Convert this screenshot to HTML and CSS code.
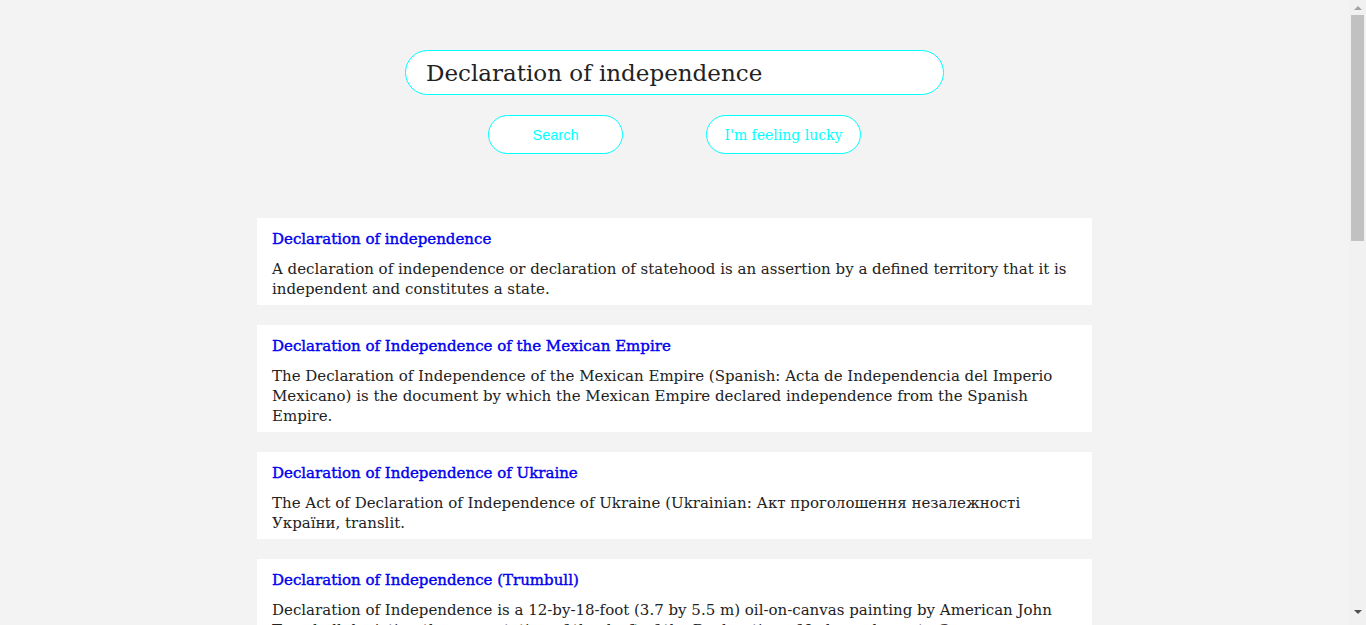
FILE: index.html
```html
<!DOCTYPE html>
<html lang="en">
<head>
<meta charset="utf-8">
<title>Search</title>
<link rel="stylesheet" href="styles.css">
</head>
<body>
<div class="page">
  <header class="search">
    <form class="search-form">
      <input class="search-input" type="text" value="Declaration of independence" autofocus>
      <div class="buttons">
        <button type="button" class="btn btn-search">Search</button>
        <button type="button" class="btn btn-lucky">I'm feeling lucky</button>
      </div>
    </form>
  </header>
  <main class="results">
    <article class="card">
      <a class="card-title" href="#">Declaration of independence</a>
      <p class="card-text">A declaration of independence or declaration of statehood is an assertion by a defined territory that it is independent and constitutes a state.</p>
    </article>
    <article class="card">
      <a class="card-title" href="#">Declaration of Independence of the Mexican Empire</a>
      <p class="card-text">The Declaration of Independence of the Mexican Empire (Spanish: Acta de Independencia del Imperio Mexicano) is the document by which the Mexican Empire declared independence from the Spanish Empire.</p>
    </article>
    <article class="card">
      <a class="card-title" href="#">Declaration of Independence of Ukraine</a>
      <p class="card-text">The Act of Declaration of Independence of Ukraine (Ukrainian: Акт проголошення незалежності України, translit.</p>
    </article>
    <article class="card">
      <a class="card-title" href="#">Declaration of Independence (Trumbull)</a>
      <p class="card-text">Declaration of Independence is a 12-by-18-foot (3.7 by 5.5 m) oil-on-canvas painting by American John Trumbull depicting the presentation of the draft of the Declaration of Independence to Congress.</p>
    </article>
    <article class="card">
      <a class="card-title" href="#">United States Declaration of Independence</a>
      <p class="card-text">The United States Declaration of Independence is the pronouncement adopted by the Second Continental Congress meeting in Philadelphia, Pennsylvania, on July 4, 1776.</p>
    </article>
    <article class="card">
      <a class="card-title" href="#">Declaration of Independence of Israel</a>
      <p class="card-text">The Israeli Declaration of Independence was proclaimed on 14 May 1948 by David Ben-Gurion, the Executive Head of the World Zionist Organization.</p>
    </article>
    <article class="card">
      <a class="card-title" href="#">Unilateral declaration of independence</a>
      <p class="card-text">A unilateral declaration of independence (UDI) is a formal process leading to the establishment of a new state by a subnational entity which declares itself independent and sovereign without a formal agreement with the state from which it is seceding.</p>
    </article>
    <article class="card">
      <a class="card-title" href="#">Declaration of Independence of Vietnam</a>
      <p class="card-text">The Proclamation of Independence of the Democratic Republic of Vietnam was written by Hồ Chí Minh and publicly read on 2 September 1945.</p>
    </article>
    <article class="card">
      <a class="card-title" href="#">Declaration of Independence (Finland)</a>
      <p class="card-text">The Finnish Declaration of Independence was adopted by the Parliament of Finland on 6 December 1917.</p>
    </article>
    <article class="card">
      <a class="card-title" href="#">Declaration of Independence of Brazil</a>
      <p class="card-text">The Independence of Brazil comprised a series of political and military events that occurred in 1821–1824, most of which involved disputes between Brazil and Portugal.</p>
    </article>
  </main>
</div>
<aside class="scrollbar" aria-hidden="true">
  <div class="sb-btn sb-up"><span class="arrow-up"></span></div>
  <div class="sb-track"><div class="sb-thumb"></div></div>
  <div class="sb-btn sb-down"><span class="arrow-down"></span></div>
</aside>
</body>
</html>
```
FILE: styles.css
```css
html, body {
  margin: 0;
  padding: 0;
}
body {
  background: #f3f3f3;
  font-family: "DejaVu Serif", "Liberation Serif", serif;
  color: #222;
  display: flex;
  align-items: flex-start;
}
.page {
  flex: 1;
  min-width: 0;
}
.search {
  padding-top: 50px;
  display: flex;
  justify-content: center;
}
.search-form {
  display: flex;
  flex-direction: column;
  align-items: center;
}
.search-input {
  box-sizing: border-box;
  width: 539px;
  height: 45px;
  border: 1px solid #00ffff;
  border-radius: 23px;
  background: #fff;
  padding: 0 20px;
  font-family: inherit;
  font-size: 23px;
  color: #222;
  outline: none;
  caret-color: #000;
}
.buttons {
  display: flex;
  gap: 83px;
  margin-top: 20px;
}
.btn {
  box-sizing: border-box;
  height: 39px;
  border: 1px solid #00ffff;
  border-radius: 20px;
  background: #fff;
  color: #00ffff;
  padding: 0;
}
.btn-search {
  width: 135px;
  font-family: "Liberation Sans", Arial, sans-serif;
  font-size: 14.5px;
}
.btn-lucky {
  width: 155px;
  font-family: "DejaVu Serif", serif;
  font-size: 14px;
}
.results {
  width: 835px;
  margin: 64px auto 0;
  display: flex;
  flex-direction: column;
  gap: 20px;
  padding-bottom: 40px;
}
.card {
  background: #fff;
  padding: 11px 15px 6px;
}
.card-title {
  display: block;
  color: #0000ee;
  text-decoration: none;
  font-size: 15px;
  line-height: 20px;
  font-weight: 400;
  -webkit-text-stroke: 0.4px #0000ee;
}
.card-text {
  margin: 10px 0 0;
  font-size: 15px;
  line-height: 20px;
}
.scrollbar {
  position: sticky;
  top: 0;
  flex: 0 0 17px;
  width: 17px;
  height: 100vh;
  background: #f1f1f1;
  display: flex;
  flex-direction: column;
}
.sb-btn {
  flex: 0 0 15px;
  display: flex;
  justify-content: center;
}
.sb-up {
  align-items: flex-end;
}
.sb-up .arrow-up {
  margin-bottom: 5px;
}
.sb-down {
  align-items: flex-start;
  flex-basis: 17px;
}
.arrow-up {
  width: 0;
  height: 0;
  border-left: 4px solid transparent;
  border-right: 4px solid transparent;
  border-bottom: 4px solid #a3a3a3;
}
.arrow-down {
  width: 0;
  height: 0;
  margin-top: 2px;
  border-left: 4px solid transparent;
  border-right: 4px solid transparent;
  border-top: 4px solid #505050;
}
.sb-track {
  flex: 1;
  padding: 0 2px;
}
.sb-thumb {
  height: 226px;
  background: #c1c1c1;
}
```
